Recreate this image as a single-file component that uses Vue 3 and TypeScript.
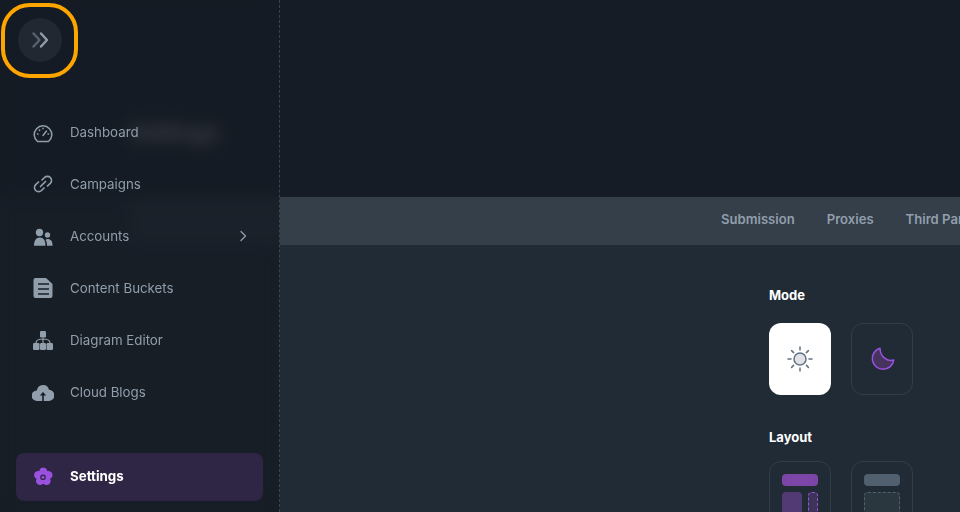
<script setup lang="ts">
const navItems = [
  { label: 'Dashboard', icon: 'gauge' },
  { label: 'Campaigns', icon: 'link' },
  { label: 'Accounts', icon: 'users', arrow: true },
  { label: 'Content Buckets', icon: 'doc' },
  { label: 'Diagram Editor', icon: 'tree' },
  { label: 'Cloud Blogs', icon: 'cloud' },
]

const tabs = ['Submission', 'Proxies', 'Third Party']
</script>

<template>
  <div class="page">
    <main class="main">
      <div class="top">
        <h1 class="title">Settings</h1>
      </div>
      <div class="tabs">
        <span v-for="tab in tabs" :key="tab" class="tab">{{ tab }}</span>
      </div>
      <div class="body">
        <h3 class="label">Mode</h3>
        <div class="tiles">
          <button class="tile tile-light">
            <svg width="26" height="26" viewBox="0 0 26 26">
              <circle cx="13" cy="13" r="6" fill="#dfe3e8" stroke="#637381" stroke-width="1.5" />
              <g stroke="#637381" stroke-width="1.5" stroke-linecap="round">
                <path d="M13 1v3M13 22v3M1 13h3M22 13h3M4.6 4.6l2 2M19.4 19.4l2 2M4.6 21.4l2-2M19.4 6.6l2-2" />
              </g>
            </svg>
          </button>
          <button class="tile">
            <svg width="26" height="26" viewBox="0 0 26 26">
              <path d="M11 2.200A10.800 10.800 0 1 0 24.800 14C19 16 11 11 11 2.200z" fill="#46345f" stroke="#9b51e0" stroke-width="1.500" stroke-linejoin="round" />
            </svg>
          </button>
        </div>
        <h3 class="label label-layout">Layout</h3>
        <div class="tiles">
          <button class="tile layout">
            <span class="bar bar-on"></span>
            <span class="split">
              <span class="block"></span>
              <span class="side"></span>
            </span>
          </button>
          <button class="tile layout">
            <span class="bar"></span>
            <span class="wide"></span>
          </button>
        </div>
      </div>
    </main>

    <aside class="sidebar">
      <div class="head">
        <button class="collapse">
          <svg width="20" height="20" viewBox="0 0 20 20" fill="none" stroke-width="2.400" stroke-linecap="round" stroke-linejoin="round">
            <path d="M3.500 3.500 9.500 10l-6 6.500" stroke="#58626e" />
            <path d="M11 3.500 17 10l-6 6.500" stroke="#919eab" />
          </svg>
        </button>
      </div>
      <nav class="nav">
        <a v-for="item in navItems" :key="item.label" class="item">
          <svg class="icon" width="22" height="22" viewBox="0 0 22 22">
            <g v-if="item.icon === 'gauge'" fill="none" stroke="#919eab" stroke-width="1.500" stroke-linecap="round" stroke-linejoin="round">
              <path d="M5.500 20.500a8.800 8.800 0 1 1 11 0z" />
              <path d="M11 14.500l3.500-4.500M5.500 13h.5M16.500 13H16M7.300 9l.4.400M11 7.300v.5" />
            </g>
            <g v-else-if="item.icon === 'link'" fill="none" stroke="#919eab" stroke-width="1.700" stroke-linecap="round">
              <path d="M10 7l2.500-2.500a4.100 4.100 0 0 1 5.800 0 4.200 4.200 0 0 1 0 5.800L15.500 13" />
              <path d="M12 15l-2.500 2.500a4.100 4.100 0 0 1-5.800 0 4.200 4.200 0 0 1 0-5.800L6.500 9" />
              <path d="M8.500 13.500l5-5" />
            </g>
            <g v-else-if="item.icon === 'users'" fill="#919eab">
              <circle cx="7.500" cy="7.500" r="3.700" />
              <circle cx="15.500" cy="10" r="2.700" />
              <path d="M2 20.800c0-5.200 2-8.300 5.800-8.300s5.700 3 5.700 8.300z" />
              <path d="M15 20.800c0-2.800-.4-4.600-1.500-6 .6-.5 1.300-.8 2.200-.8 2.900 0 4.800 2.300 4.800 5.500v1.300z" />
            </g>
            <path v-else-if="item.icon === 'doc'" fill="#919eab" fill-rule="evenodd" d="M1.500 3A2 2 0 0 1 3.500 1H14l6.500 6v12a2 2 0 0 1-2 2h-15a2 2 0 0 1-2-2zM6 6.300v1.500h11V6.300zm0 5v1.500h11v-1.500zm0 5v1.500h11v-1.500z" />
            <g v-else-if="item.icon === 'tree'" fill="#919eab">
              <rect x="8" y="2" width="6" height="6.500" rx="1.200" />
              <rect x="1" y="14" width="6.500" height="7" rx="1.200" />
              <rect x="8" y="14" width="6" height="7" rx="1.200" />
              <rect x="14.500" y="14" width="6.500" height="7" rx="1.200" />
              <path d="M4 14c0-3 3-4 7-4s7 1 7 4M11 8.500V14" fill="none" stroke="#919eab" stroke-width="1.200" />
            </g>
            <path v-else-if="item.icon === 'cloud'" fill="#919eab" fill-rule="evenodd" d="M11 4a6 6 0 0 1 6 4.800A5.200 5.200 0 0 1 16.500 20H5a5.200 5.200 0 0 1-.2-10.500A6.500 6.500 0 0 1 11 4zM10.200 20h1.600v-5.500h2.400L11 11l-3.200 3.500h2.400z" />
          </svg>
          <span class="text">{{ item.label }}</span>
          <svg v-if="item.arrow" class="arrow" width="16" height="16" viewBox="0 0 16 16">
            <path d="M6 3.500 10.500 8 6 12.500" fill="none" stroke="#919eab" stroke-width="1.300" stroke-linecap="round" stroke-linejoin="round" />
          </svg>
        </a>
        <a class="item active">
          <svg class="icon" width="22" height="22" viewBox="0 0 22 22">
            <path fill="#9b51e0" fill-rule="evenodd" d="M11 1.500c2.500 0 4.200 1.700 4.300 3.700 2-.5 4.300.5 5 2.600.7 2.200-.4 4.200-2.300 5 1.100 1.800.9 4.200-.9 5.500-1.900 1.400-4.400.9-5.800-.7-1.400 1.600-3.900 2-5.700.7-1.800-1.300-2.100-3.700-1-5.500-1.900-.8-3-2.800-2.300-5 .7-2.100 3-3.100 5-2.600.1-2 1.700-3.700 4-3.700zM11 8.500a2.800 2.800 0 1 0 0 5.600 2.800 2.800 0 0 0 0-5.600z" />
            <circle cx="11" cy="11.300" r="1.500" fill="#9b51e0" />
          </svg>
          <span class="text">Settings</span>
        </a>
      </nav>
      <span class="highlight"></span>
    </aside>
  </div>
</template>

<style>
html,
body {
  margin: 0;
  background: #212b36;
}
</style>

<style scoped>
.page {
  position: relative;
  width: 960px;
  height: 512px;
  overflow: hidden;
  font-family: Inter, "Noto Sans", sans-serif;
  background: #212b36;
}

.main {
  margin-left: 130px;
  display: flex;
  flex-direction: column;
  height: 512px;
  background: #212b36;
}

.top {
  height: 197px;
  flex: none;
  box-sizing: border-box;
  padding-top: 118px;
  margin-left: -130px;
  padding-left: 130px;
  background: #151c25;
}

.title {
  margin: 0;
  font-size: 22px;
  line-height: 28px;
  font-weight: 700;
  color: #fff;
}

.tabs {
  height: 48px;
  flex: none;
  box-sizing: border-box;
  display: flex;
  align-items: center;
  gap: 32px;
  padding: 0 0 4px 591px;
  background: #343f4a;
  white-space: nowrap;
  overflow: hidden;
}

.tab {
  font-size: 13.1px;
  font-weight: 600;
  color: #919eab;
}

.body {
  padding: 42px 0 0 639px;
}

.label {
  margin: 0 0 20px;
  font-size: 13px;
  line-height: 16px;
  font-weight: 700;
  color: #fff;
}

.label-layout {
  margin: 34px 0 16px;
}

.tiles {
  display: flex;
  gap: 20px;
}

.tile {
  width: 62px;
  height: 72px;
  flex: none;
  box-sizing: border-box;
  display: flex;
  align-items: center;
  justify-content: center;
  padding: 0;
  border: 1px solid rgba(145, 158, 171, 0.16);
  border-radius: 12px;
  background: transparent;
}

.tile-light {
  border: none;
  background: #fff;
}

.layout {
  flex-direction: column;
  justify-content: flex-start;
  gap: 6px;
  padding-top: 12px;
}

.bar {
  width: 36px;
  height: 12px;
  flex: none;
  border-radius: 4px;
  background: #50606e;
}

.bar-on {
  background: #7e45a8;
}

.split {
  width: 36px;
  height: 42px;
  flex: none;
  display: flex;
  gap: 6px;
}

.block {
  width: 20px;
  border-radius: 4px;
  background: #523a75;
}

.side {
  width: 10px;
  box-sizing: border-box;
  border: 1px dashed #9b51e0;
  border-radius: 4px;
  background: #3e3358;
}

.wide {
  width: 36px;
  height: 42px;
  flex: none;
  box-sizing: border-box;
  border: 1px dashed #50606e;
  border-radius: 4px;
  background: #2a373f;
}

.sidebar {
  position: absolute;
  top: 0;
  left: 0;
  bottom: 0;
  width: 280px;
  box-sizing: border-box;
  padding: 0 16px;
  border-right: 1px dashed rgba(145, 158, 171, 0.3);
  background: rgba(22, 28, 36, 0.84);
  backdrop-filter: blur(8px);
}

.head {
  height: 108px;
  box-sizing: border-box;
  padding: 18px 0 0 2px;
}

.collapse {
  width: 44px;
  height: 44px;
  display: flex;
  align-items: center;
  justify-content: center;
  padding: 0;
  border: none;
  border-radius: 50%;
  background: #212831;
}

.nav {
  display: flex;
  flex-direction: column;
  gap: 4px;
}

.item {
  height: 48px;
  display: flex;
  align-items: center;
  padding: 0 12px 0 16px;
  border-radius: 8px;
  color: #919eab;
  font-size: 13.3px;
  font-weight: 400;
}

.icon {
  flex: none;
  margin-right: 16px;
}

.text {
  flex: 1;
}

.arrow {
  flex: none;
}

.active {
  margin-top: 33px;
  background: #2f2544;
  color: #fff;
  font-weight: 700;
}

.active .text {
  padding-bottom: 2px;
}

.highlight {
  position: absolute;
  left: 1px;
  top: 3px;
  width: 77px;
  height: 75px;
  box-sizing: border-box;
  border: 4px solid #ffa500;
  border-radius: 29px;
}
</style>
